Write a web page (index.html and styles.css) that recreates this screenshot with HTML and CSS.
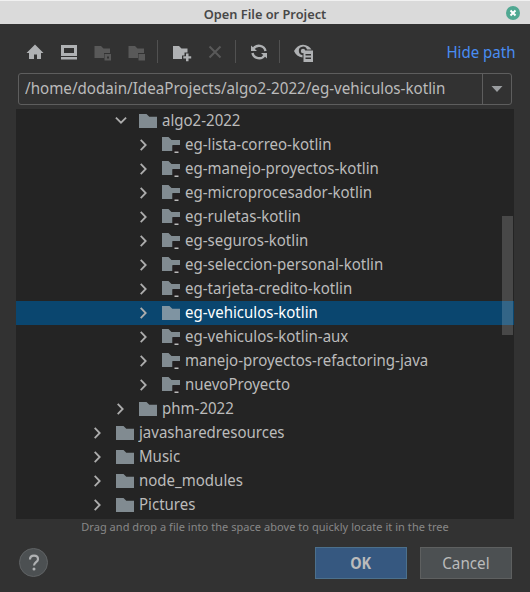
FILE: index.html
```
<!DOCTYPE html>
<html lang="en">
<head>
<meta charset="utf-8">
<title>Open File or Project</title>
<link rel="stylesheet" href="styles.css">
</head>
<body>
<svg class="defs" width="0" height="0" aria-hidden="true">
  <symbol id="folder" viewBox="0 0 18 14"><path d="M0 0h7.5l2.8 2.7H18V14H0z"/></symbol>
  <symbol id="module" viewBox="0 0 18 18"><path class="shape" d="M0 1h6.500l3 3H18V9h-7.500V15H0z"/><path class="badge" d="M10.500 9.500h7.500v7h-7.500z"/><path class="dash" d="M12.500 15.500h4v1.500h-4z"/></symbol>
  <symbol id="arrow" viewBox="0 0 12 12"><path d="M2.700.9 7.700 6l-5 5.100"/></symbol>
</svg>
<main class="dialog">
  <header class="titlebar"><h1>Open File or Project</h1>
    <svg class="close" width="14" height="14" viewBox="0 0 14 14"><circle cx="7" cy="7" r="7"/><path d="m4.500 4.500 5 5m0-5-5 5"/></svg>
  </header>
  <nav class="toolbar">
    <svg class="tool" viewBox="0 0 20 20"><path d="M10 2.500 18.500 11H16v6h-4v-4.500H9V17H4v-6H1.500z"/></svg>
    <svg class="tool" viewBox="0 0 20 20"><path fill-rule="evenodd" d="M2 3h16v11H2zm3 3v5h10V6zM2 15h16v2.500H2z"/></svg>
    <svg class="tool off" viewBox="0 0 20 20"><path fill-rule="evenodd" d="M1.500 4H8l2.500 2.500h6.500V11h-6v5H1.500zM11.500 12h6.500v6.500h-6.500zm2.500 2.500v2h2v-2z"/></svg>
    <svg class="tool off" viewBox="0 0 20 20"><path d="M1.500 4H8l2.500 2.500h6.500V11h-6v5H1.500zM11.500 12h6.500v6.500h-6.500z"/></svg>
    <i class="sep"></i>
    <svg class="tool" viewBox="0 0 20 20"><path d="M2 4h6l2.500 2.500h6V10.500H13.500v3H11V17H2zM15 11.500h2.500v2.700h2.700v2.300h-2.700v2.700H15v-2.700h-2.700v-2.300H15z"/></svg>
    <svg class="tool off" viewBox="0 0 20 20"><path class="line" d="M4.500 4.500 15.500 15.500m0-11-11 11"/></svg>
    <i class="sep"></i>
    <svg class="tool" viewBox="0 0 20 20"><path class="line thick" d="M4.200 7A6.700 6.700 0 0 1 16.500 9M15.800 13A6.700 6.700 0 0 1 3.500 11"/><path d="M2 3.500V9h6zM18 16.500V11h-6z"/></svg>
    <i class="sep"></i>
    <svg class="tool" viewBox="0 0 20 20"><path fill-rule="evenodd" d="M1 9C3 5 6 2.700 10 2.700s7 2.300 8.500 4.800H14A4.200 4.200 0 1 0 9.500 13v2.500C5.500 15 2.500 12.500 1 9z"/><circle cx="10" cy="9" r="2.200"/><path fill-rule="evenodd" d="M10.500 8.500H20V20h-9.500zm2 3.500v1.500H18V12zm0 3.500V17H18v-1.500z"/></svg>
    <a class="hide">Hide path</a>
  </nav>
  <div class="path"><span class="value"><span class="label">/home/dodain/IdeaProjects/algo2-2022/eg-vehiculos-kotlin</span></span><span class="drop"><svg width="12" height="6" viewBox="0 0 12 6"><path d="M.500 0h11L6 6z"/></svg></span></div>
  <section class="tree">
    <ul>
      <li class="l1"><svg class="arrow open"><use href="#arrow"/></svg><svg class="folder"><use href="#folder"/></svg><span>algo2-2022</span></li>
      <li class="l2"><svg class="arrow"><use href="#arrow"/></svg><svg class="module"><use href="#module"/></svg><span>eg-lista-correo-kotlin</span></li>
      <li class="l2"><svg class="arrow"><use href="#arrow"/></svg><svg class="module"><use href="#module"/></svg><span>eg-manejo-proyectos-kotlin</span></li>
      <li class="l2"><svg class="arrow"><use href="#arrow"/></svg><svg class="module"><use href="#module"/></svg><span>eg-microprocesador-kotlin</span></li>
      <li class="l2"><svg class="arrow"><use href="#arrow"/></svg><svg class="module"><use href="#module"/></svg><span>eg-ruletas-kotlin</span></li>
      <li class="l2"><svg class="arrow"><use href="#arrow"/></svg><svg class="module"><use href="#module"/></svg><span>eg-seguros-kotlin</span></li>
      <li class="l2"><svg class="arrow"><use href="#arrow"/></svg><svg class="module"><use href="#module"/></svg><span>eg-seleccion-personal-kotlin</span></li>
      <li class="l2"><svg class="arrow"><use href="#arrow"/></svg><svg class="module"><use href="#module"/></svg><span>eg-tarjeta-credito-kotlin</span></li>
      <li class="l2 selected"><svg class="arrow"><use href="#arrow"/></svg><svg class="folder"><use href="#folder"/></svg><span>eg-vehiculos-kotlin</span></li>
      <li class="l2"><svg class="arrow"><use href="#arrow"/></svg><svg class="module"><use href="#module"/></svg><span>eg-vehiculos-kotlin-aux</span></li>
      <li class="l2"><svg class="arrow"><use href="#arrow"/></svg><svg class="module"><use href="#module"/></svg><span>manejo-proyectos-refactoring-java</span></li>
      <li class="l2"><svg class="arrow"><use href="#arrow"/></svg><svg class="module"><use href="#module"/></svg><span>nuevoProyecto</span></li>
      <li class="l1"><svg class="arrow"><use href="#arrow"/></svg><svg class="folder"><use href="#folder"/></svg><span>phm-2022</span></li>
      <li class="l0"><svg class="arrow"><use href="#arrow"/></svg><svg class="folder"><use href="#folder"/></svg><span>javasharedresources</span></li>
      <li class="l0"><svg class="arrow"><use href="#arrow"/></svg><svg class="folder"><use href="#folder"/></svg><span>Music</span></li>
      <li class="l0"><svg class="arrow"><use href="#arrow"/></svg><svg class="folder"><use href="#folder"/></svg><span>node_modules</span></li>
      <li class="l0"><svg class="arrow"><use href="#arrow"/></svg><svg class="folder"><use href="#folder"/></svg><span>Pictures</span></li>
    </ul>
    <i class="thumb"></i>
  </section>
  <p class="hint">Drag and drop a file into the space above to quickly locate it in the tree</p>
  <footer><button class="help" aria-label="Help"><svg width="12" height="17" viewBox="0 0 12 17"><path d="M2 5.500C2 3 3.700 1.700 6 1.700s4 1.300 4 3.500c0 2.800-4 3.200-4 6.300"/><circle cx="6" cy="15" r="1.500"/></svg></button><button class="btn ok"><span>OK</span></button><button class="btn"><span>Cancel</span></button></footer>
</main>
</body>
</html>
```
FILE: styles.css
```
* { box-sizing: border-box; }
body { margin: 0; background: #323232; font-family: "Noto Sans", sans-serif; font-size: 16px; color: #bbb; }
.defs { position: absolute; }
.dialog { width: 530px; height: 592px; display: flex; flex-direction: column; overflow: hidden; }
.titlebar { height: 24px; flex: none; display: flex; align-items: center; padding: 0 10px 0 24px; background: #dadada; border-top: 1px solid #f1f1f1; }
h1 { flex: 1; margin: 0; padding-top: 2px; text-align: center; font-size: 12.800px; font-weight: 600; line-height: 20px; color: #484848; }
.close circle { fill: #50a892; }
.close path { stroke: #fff; stroke-width: 2; }
.toolbar { height: 49px; flex: none; display: flex; align-items: center; padding: 6px 15px 0 25px; }
.tool { width: 20px; height: 20px; margin-right: 14px; fill: #afb1b3; overflow: visible; }
.tool.off { fill: #595959; }
.line { fill: none; stroke: #afb1b3; stroke-width: 2; }
.thick { stroke-width: 2.400; }
.off .line { stroke: #595959; }
.sep { width: 1px; height: 23px; margin: 0 13px 0 -4px; background: #515151; }
.hide { margin-left: auto; color: #498df2; white-space: nowrap; transform: scaleX(.94); transform-origin: right; }
.path { height: 32px; flex: none; margin: 0 18px; border: 1px solid #5e5e5e; border-radius: 3px; display: flex; align-items: stretch; line-height: 28px; }
.value { flex: 1; padding-left: 6px; white-space: nowrap; }
.label { display: inline-block; transform: scaleX(.947); transform-origin: left; }
.drop { width: 29px; border-left: 1px solid #5e5e5e; display: flex; align-items: center; justify-content: center; }
.drop path { fill: #9a9da0; }
.tree { height: 410px; flex: none; margin: 4px 16px 0; background: #242424; position: relative; }
ul { margin: 0; padding: 0; list-style: none; }
li { height: 24px; display: flex; align-items: center; line-height: 22px; white-space: nowrap; }
li span { height: 24px; transform: scaleX(.9385); transform-origin: left; }
.l0 { padding-left: 76px; }
.l1 { padding-left: 99px; }
.l2 { padding-left: 122px; }
.selected { background: #0a466f; color: #fff; }
.arrow { width: 12px; height: 12px; margin-right: 12px; fill: none; stroke: #adadad; stroke-width: 1.800; }
.open { transform: rotate(90deg); }
.folder { width: 18px; height: 14px; margin-right: 5px; fill: #818b91; }
.selected .folder { fill: #7f94a2; }
.module { width: 18px; height: 18px; margin-right: 5px; }
.shape { fill: #818b91; }
.badge { fill: #231f20; }
.dash { fill: #bbb; }
.thumb { position: absolute; right: 1px; top: 107px; width: 11px; height: 119px; background: rgba(255,255,255,.17); }
.hint { margin: 0; height: 17px; flex: none; text-align: center; font-size: 11px; letter-spacing: .045px; line-height: 16px; color: #888; white-space: nowrap; }
footer { display: flex; align-items: center; height: 31px; margin: 11px 18px 0 19px; }
button { font: inherit; color: #bbb; padding: 0; }
.help { width: 29px; height: 29px; margin-right: auto; border: 1px solid #606365; border-radius: 50%; background: #4c5052; display: flex; align-items: center; justify-content: center; }
.help path { fill: none; stroke: #afb1b3; stroke-width: 2.200; }
.help circle { fill: #afb1b3; }
.btn { width: 92px; height: 32px; flex: none; border: 1px solid #5e6060; background: #4c5052; }
.btn span { display: inline-block; transform: scaleX(.95); }
.ok { margin-right: 13px; border-color: #4c708c; background: #365880; font-weight: 700; }
.ok span { transform: scaleX(.9); }
```
